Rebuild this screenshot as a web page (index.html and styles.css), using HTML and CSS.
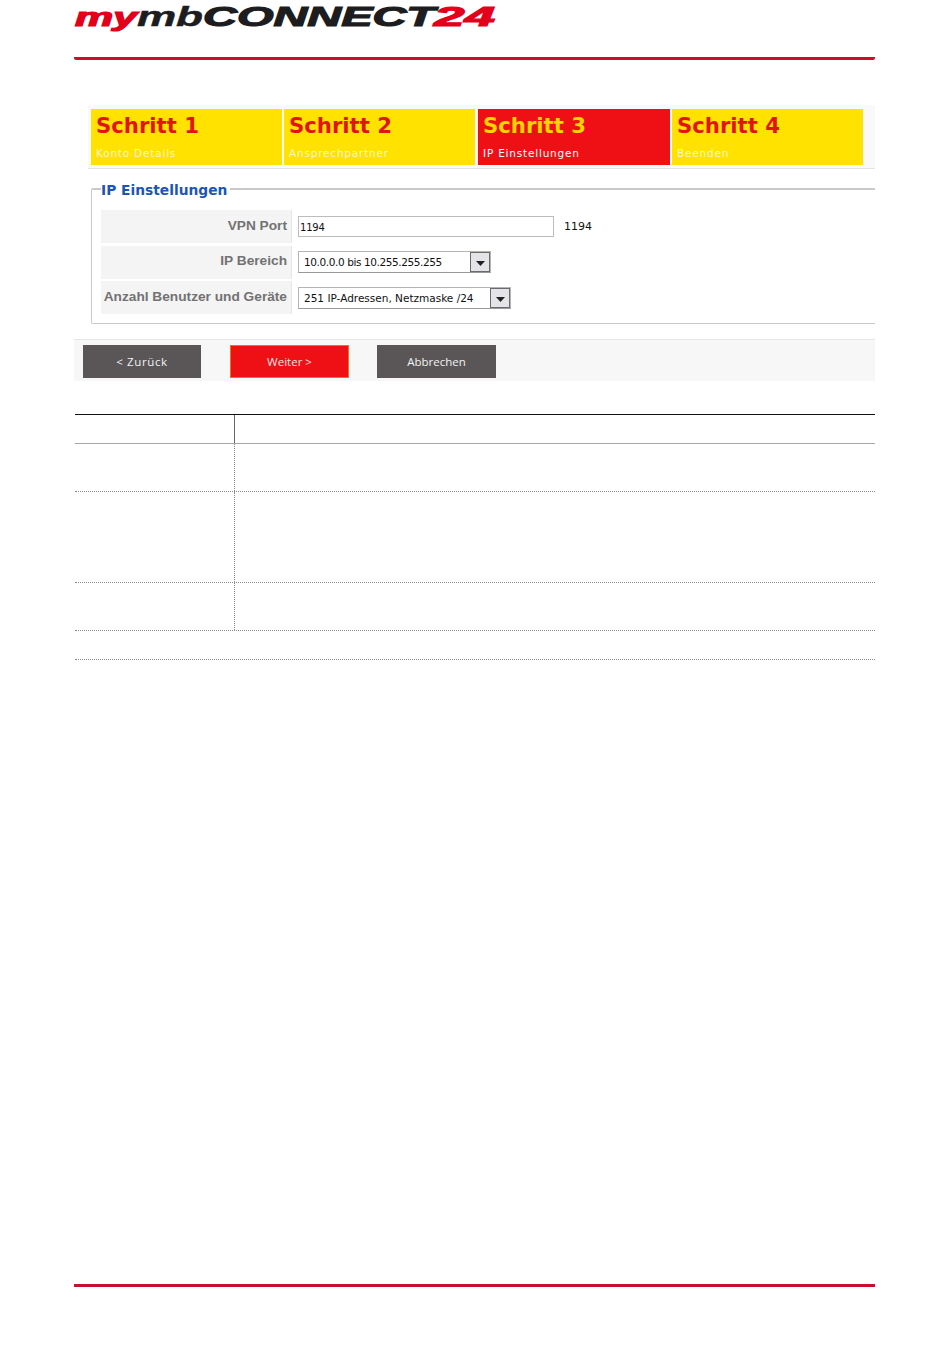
FILE: index.html
```html
<!DOCTYPE html>
<html lang="de">
<head>
<meta charset="utf-8">
<title>mymbCONNECT24</title>
<link rel="stylesheet" href="styles.css">
</head>
<body>
<div class="page">
  <header class="header">
    <svg class="logo" width="424" height="34" viewBox="0 0 424 34" role="img" aria-label="mymbCONNECT24">
      <text class="logo-text red" x="1" y="26" font-size="25" textLength="62" lengthAdjust="spacingAndGlyphs">my</text>
      <text class="logo-text dark thin" x="63" y="26" font-size="28" textLength="66" lengthAdjust="spacingAndGlyphs">mb</text>
      <text class="logo-text dark" x="129" y="26" font-size="28" textLength="232" lengthAdjust="spacingAndGlyphs">CONNECT</text>
      <text class="logo-text red" x="360" y="26" font-size="28" textLength="61" lengthAdjust="spacingAndGlyphs">24</text>
    </svg>
  </header>

  <main class="wizard">
    <nav class="steps">
      <div class="step"><div class="step-title">Schritt 1</div><div class="step-sub">Konto Details</div></div>
      <div class="step"><div class="step-title">Schritt 2</div><div class="step-sub">Ansprechpartner</div></div>
      <div class="step active"><div class="step-title">Schritt 3</div><div class="step-sub">IP Einstellungen</div></div>
      <div class="step"><div class="step-title">Schritt 4</div><div class="step-sub">Beenden</div></div>
    </nav>

    <fieldset class="group">
      <legend class="group-title">IP Einstellungen</legend>
      <div class="row">
        <div class="label">VPN Port</div>
        <div class="field">
          <div class="textbox">1194</div>
          <span class="hint">1194</span>
        </div>
      </div>
      <div class="row">
        <div class="label">IP Bereich</div>
        <div class="field">
          <div class="select s-range">
            <span class="select-text">10.0.0.0 bis 10.255.255.255</span>
            <span class="select-btn"><svg width="9" height="5" viewBox="0 0 9 5"><path d="M0 0h9L4.5 5z" fill="#222"/></svg></span>
          </div>
        </div>
      </div>
      <div class="row">
        <div class="label">Anzahl Benutzer und Geräte</div>
        <div class="field">
          <div class="select s-users">
            <span class="select-text">251 IP-Adressen, Netzmaske /24</span>
            <span class="select-btn"><svg width="9" height="5" viewBox="0 0 9 5"><path d="M0 0h9L4.5 5z" fill="#222"/></svg></span>
          </div>
        </div>
      </div>
    </fieldset>

    <div class="actions">
      <button class="btn back" type="button">&lt; Zurück</button>
      <button class="btn primary" type="button">Weiter &gt;</button>
      <button class="btn cancel" type="button">Abbrechen</button>
    </div>
  </main>

  <section class="table">
    <div class="tr head"><div class="td first"></div><div class="td"></div></div>
    <div class="tr r48"><div class="td first"></div><div class="td"></div></div>
    <div class="tr r91"><div class="td first"></div><div class="td"></div></div>
    <div class="tr r48"><div class="td first"></div><div class="td"></div></div>
    <div class="tr r29"></div>
  </section>

  <footer class="footer"></footer>
</div>
</body>
</html>
```
FILE: styles.css
```css
* { box-sizing: border-box; }
html, body { margin: 0; padding: 0; background: #fff; }
body { height: 1360px; overflow: hidden; font-family: "Liberation Sans", Arial, sans-serif; }

.page { width: 801px; margin-left: 74px; }

.header { height: 60px; border-bottom: 3px solid #c8102e; border-radius: 0 0 2px 2px; }
.logo { display: block; }
.logo-text { font-family: "Liberation Sans", Arial, sans-serif; font-weight: 700; font-style: italic; stroke-width: 1.2px; }
.logo-text.thin { stroke-width: 0.5px; }
.red { fill: #e2001a; stroke: #e2001a; }
.dark { fill: #1d1d1f; stroke: #1d1d1f; }

.wizard { padding-top: 45px; }

.steps {
  margin-left: 14px;
  height: 64px;
  padding: 4px 12px 3px 3px;
  display: grid;
  grid-template-columns: 191px 191px 193px 191px;
  column-gap: 2px;
  background: #f9f9f9;
  border-bottom: 1px solid #e2e2e2;
}
.step { background: #ffe200; padding: 4px 5px; color: #e2140f; overflow: hidden; }
.step-title { font-family: "DejaVu Sans", Verdana, sans-serif; font-weight: 700; font-size: 21.2px; line-height: 26px; white-space: nowrap; }
.step-sub { margin-top: 7px; font-family: "DejaVu Sans", Verdana, sans-serif; font-size: 10.5px; line-height: 14px; letter-spacing: 0.8px; color: #fff8c4; white-space: nowrap; }
.step.active { margin-left: 1px; background: #ee1015; color: #ffd400; }
.step.active .step-sub { color: #fff; }

.group {
  margin: 9px 0 0 17px;
  padding: 11px 0 8px 9px;
  min-width: 0;
  height: 146px;
  border: 2px solid #c9c9c9;
  border-width: 2px 0 1px 1px;
  border-radius: 2px 0 0 2px;
}
.group-title {
  margin-left: 0;
  padding: 4px 3px 0 0;
  font-family: "DejaVu Sans", Verdana, sans-serif;
  font-weight: 700;
  font-size: 13.8px;
  line-height: 17px;
  color: #1c55b4;
}
.row { display: flex; height: 33px; margin-bottom: 2.5px; }
.label {
  width: 191px;
  padding: 0 4px 3px 0;
  display: flex;
  align-items: center;
  justify-content: flex-end;
  background: #f4f4f4;
  border-right: 1px solid #e6e6e6;
  font-weight: 700;
  font-size: 13.7px;
  color: #727272;
  white-space: nowrap;
}
.field { display: flex; align-items: center; padding-left: 6px; font-family: "DejaVu Sans", Verdana, sans-serif; font-size: 11px; color: #111; }
.textbox { width: 256px; height: 21px; padding-left: 1px; line-height: 21px; border: 1px solid #bcbcbc; background: #fff; font-size: 10px; letter-spacing: -0.2px; }
.hint { margin-left: 10px; }
.select { display: flex; align-items: center; justify-content: space-between; height: 22px; padding: 0 0 0 5px; border: 1px solid #b5b5b5; border-bottom-color: #999; background: #fff; font-size: 10.5px; }
.s-range { width: 193px; letter-spacing: -0.4px; }
.s-users { width: 213px; }
.select-text { white-space: nowrap; }
.select-btn {
  width: 20px;
  height: 20px;
  display: flex;
  align-items: center;
  justify-content: center;
  padding-top: 3px;
  background: #e4e4e8;
  border: 1px solid #6b6b6b;
}

.actions {
  margin-top: 15px;
  height: 42px;
  padding: 5px 0 0 9px;
  display: flex;
  gap: 29px;
  background: #f7f7f7;
  border-top: 1px solid #e6e6e6;
}
.btn {
  width: 118px;
  height: 33px;
  padding: 0;
  border: 0;
  background: #5a5657;
  color: #f2f2f2;
  font-family: "Open Sans", "DejaVu Sans", sans-serif;
  font-size: 11.5px;
}
.btn.back { letter-spacing: 0.6px; }
.btn.primary { width: 119px; background: #ee1015; border: 1px solid #f0701a; color: #ffe4e4; }
.btn.cancel { margin-left: -1px; width: 119px; }

.table { margin: 33px 0 0 1px; width: 800px; border-top: 1px solid #111; }
.tr { display: flex; border-bottom: 1px dotted #8a8a8a; }
.tr.head { height: 29px; border-bottom: 1px solid #a6a6a6; }
.r48 { height: 48px; }
.r91 { height: 91px; }
.r29 { height: 29px; }
.td { flex: 1; }
.td.first { flex: 0 0 160px; border-right: 1px dotted #8a8a8a; }
.head .td.first { border-right: 1px solid #666; }

.footer { margin-top: 624px; height: 3px; background: #c8102e; }
```
